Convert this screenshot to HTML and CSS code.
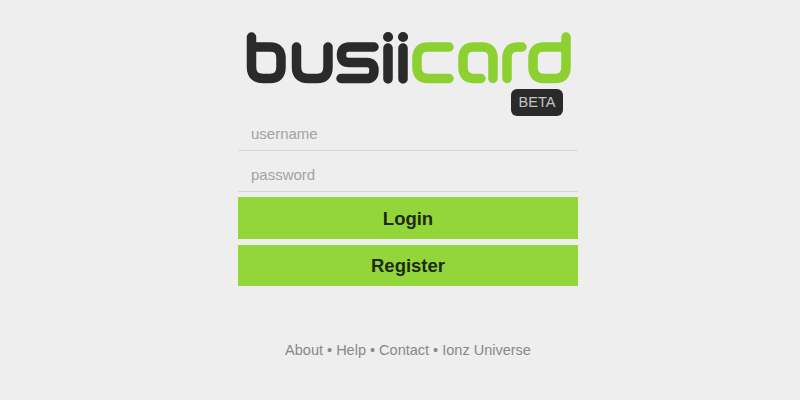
FILE: index.html
```html
<!DOCTYPE html>
<html lang="en">
<head>
<meta charset="utf-8">
<title>busiicard</title>
<link rel="stylesheet" href="styles.css">
</head>
<body>
<main class="panel">
  <div class="brand">
    <svg class="logo" viewBox="0 0 340 62" width="340" height="62" role="img" aria-label="busiicard">
      <g class="ink">
        <path d="M13.500 6V36Q13.500 47.500 25 47.500H32Q43 47.500 43 36V27Q43 16 32 16H15"/>
        <path d="M58.500 16V36Q58.500 47.500 70 47.500H79Q90 47.500 90 36V16"/>
        <path d="M136 16H111Q103.500 16 103.500 24Q103.500 31.500 111 31.500H129Q136 31.500 136 39.500Q136 47.500 129 47.500H103"/>
        <path d="M150 17V48M165 17V48"/>
      </g>
      <g class="ink-dot">
        <path d="M150 6H150.100M165 6H165.100"/>
      </g>
      <g class="lime">
        <path d="M211 16H190Q179 16 179 27V36Q179 47.500 190 47.500H211"/>
        <path d="M255 47.500V27Q255 16 244 16H236Q225 16 225 27V36Q225 47.500 236 47.500H243"/>
        <path d="M269 47.500V27Q269 16 280 16H284"/>
        <path d="M328 6V36Q328 47.500 317 47.500H306Q295 47.500 295 36V27Q295 16 306 16H326"/>
      </g>
    </svg>
    <span class="badge">BETA</span>
  </div>
  <form class="form">
    <input class="field" type="text" placeholder="username">
    <input class="field" type="password" placeholder="password">
    <button class="btn" type="button">Login</button>
    <button class="btn btn-second" type="button">Register</button>
  </form>
  <nav class="links">
    <a href="#">About</a> • <a href="#">Help</a> • <a href="#">Contact</a> • <a href="#">Ionz Universe</a>
  </nav>
</main>
</body>
</html>
```
FILE: styles.css
```css
html, body {
  margin: 0;
  height: 400px;
  overflow: hidden;
  background: #eeeeee;
  font-family: "Liberation Sans", Arial, sans-serif;
}
.panel {
  width: 340px;
  margin-left: 238px;
  padding-top: 31px;
  display: flex;
  flex-direction: column;
}
.brand {
  position: relative;
  height: 82px;
}
.logo {
  display: block;
}
.ink, .lime, .ink-dot {
  fill: none;
  stroke-linecap: round;
  stroke-linejoin: round;
}
.ink { stroke: #2a2a2a; stroke-width: 9.500; }
.ink-dot { stroke: #2a2a2a; stroke-width: 10; }
.lime { stroke: #8cd032; stroke-width: 9.500; }
.badge {
  position: absolute;
  left: 273px;
  top: 58px;
  width: 52px;
  height: 27px;
  line-height: 27px;
  text-align: center;
  border-radius: 6px;
  background: #2a2a2a;
  color: #c4c4c4;
  font-size: 14.500px;
}
.form {
  display: flex;
  flex-direction: column;
}
.field {
  box-sizing: border-box;
  height: 38px;
  padding: 4px 13px 0;
  margin-bottom: 3px;
  border: 0;
  border-bottom: 1px solid #d6d6d6;
  background: transparent;
  font: 15px "Liberation Sans", Arial, sans-serif;
  color: #999;
  outline: none;
}
.field::placeholder {
  color: #a3a3a3;
  opacity: 1;
}
.btn {
  height: 42px;
  margin-top: 2px;
  border: 0;
  padding: 1px 0 0;
  background: #93d63a;
  color: #1f2a14;
  font: bold 18.500px "Liberation Sans", Arial, sans-serif;
}
.btn-second {
  height: 41px;
  margin-top: 6px;
  padding: 0;
}
.links {
  margin-top: 55px;
  text-align: center;
  font-size: 14.500px;
  line-height: 18px;
  color: #888;
}
.links a {
  color: #888;
  text-decoration: none;
}
```
